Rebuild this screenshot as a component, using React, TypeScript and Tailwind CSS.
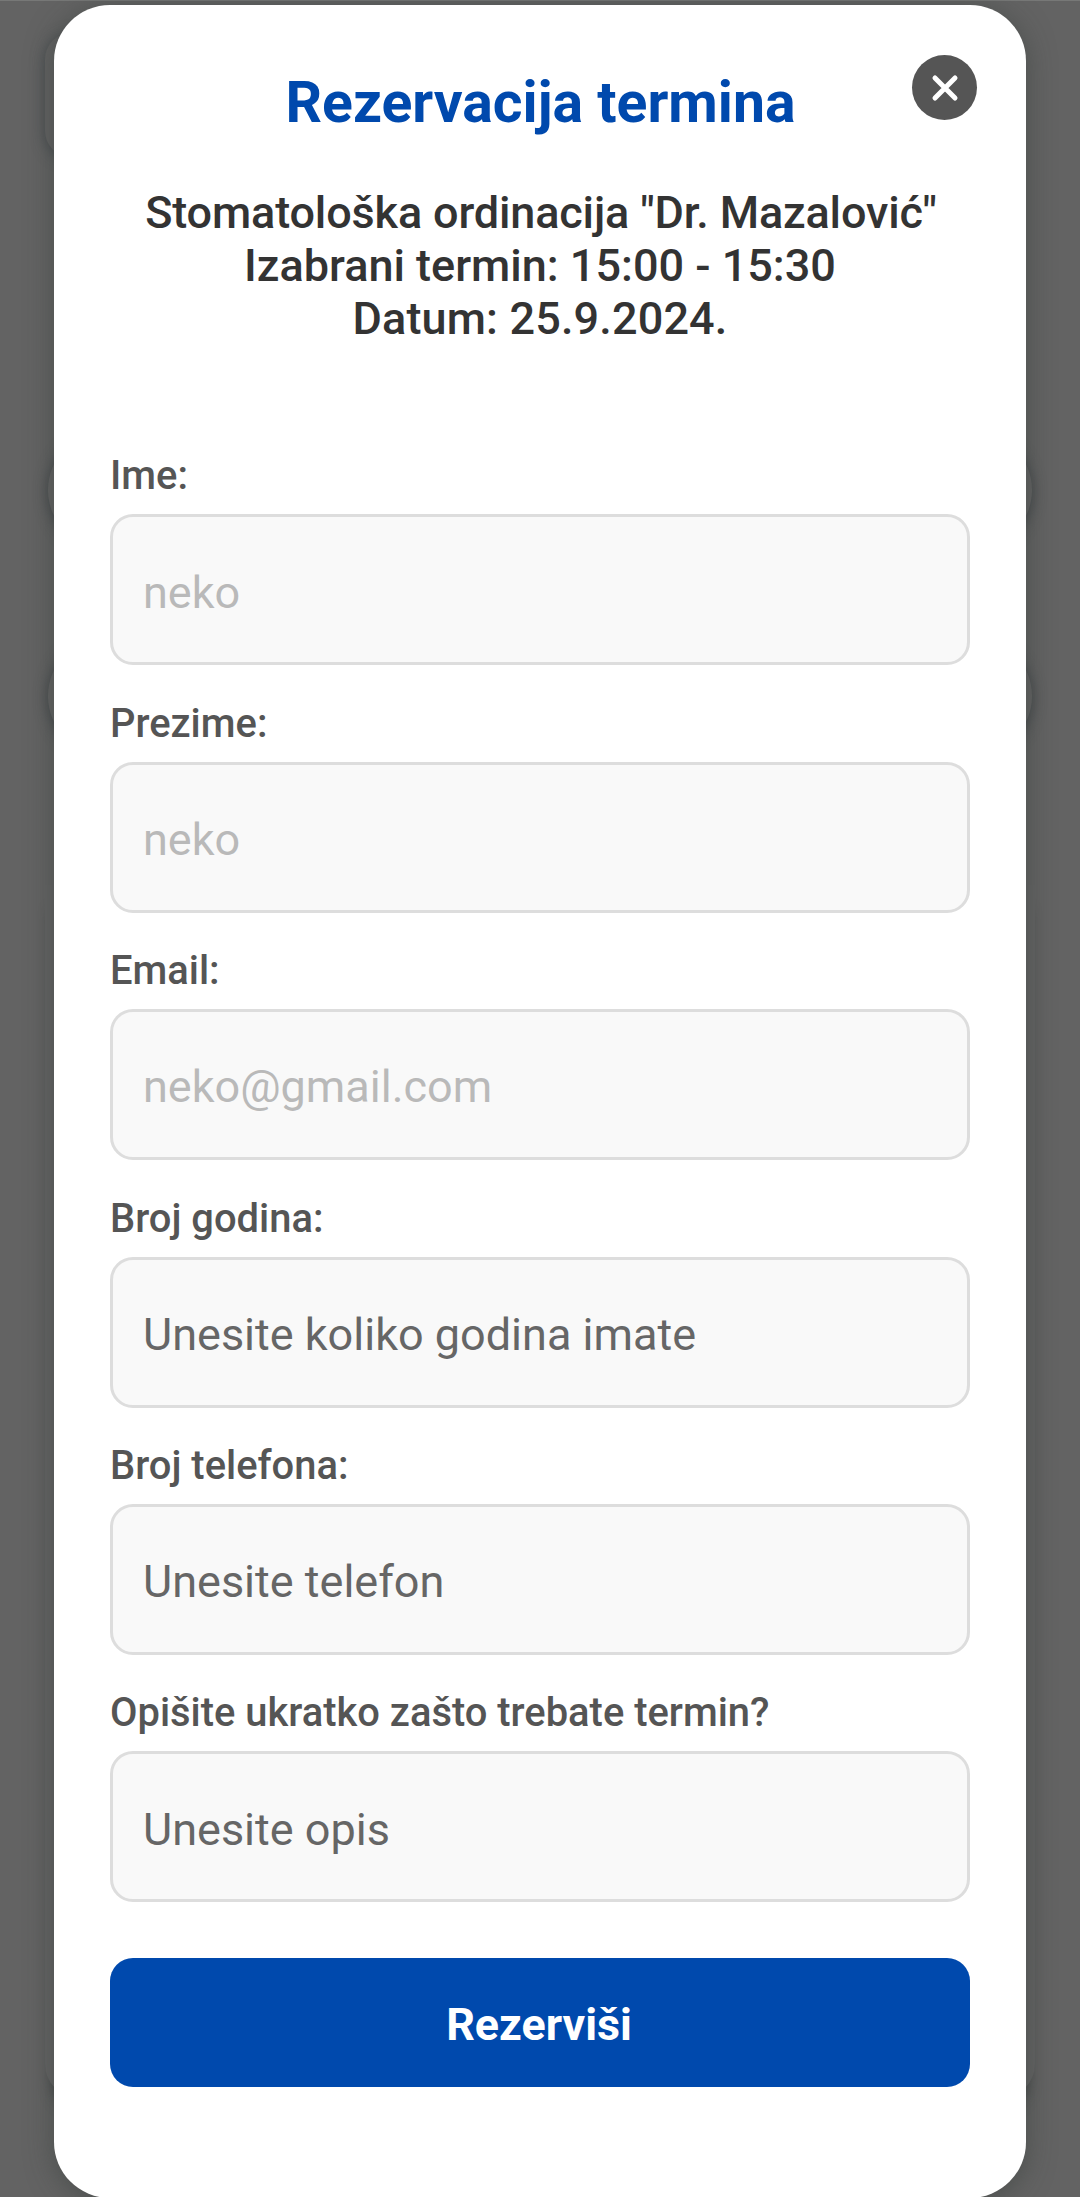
const fields = [
  { label: "Ime:", text: "neko", muted: true },
  { label: "Prezime:", text: "neko", muted: true },
  { label: "Email:", text: "neko@gmail.com", muted: true },
  { label: "Broj godina:", text: "Unesite koliko godina imate", muted: false },
  { label: "Broj telefona:", text: "Unesite telefon", muted: false },
  { label: "Opišite ukratko zašto trebate termin?", text: "Unesite opis", muted: false },
];

// Dimmed page content that peeks out from behind the dialog.
function Backdrop() {
  return (
    <div aria-hidden="true" className="absolute inset-0 flex flex-col border-t border-[#777877] bg-[#636363] px-[45px] pt-8">
      <div className="h-[124px] w-1/2 shrink-0 rounded-[26px] bg-[#626262] shadow-[0_2px_14px_rgba(50,58,64,0.6)]" />
      <div className="flex shrink-0 flex-col gap-[88px] px-[3px] pt-[274px] pb-[130px]">
        <div className="h-[118px] rounded-[59px] bg-[#636363] shadow-[0_2px_14px_rgba(50,56,60,0.7)]" />
        <div className="h-[118px] rounded-[59px] bg-[#636363] shadow-[0_2px_14px_rgba(50,56,60,0.7)]" />
      </div>
      <div className="h-[1213px] shrink-0 rounded-b-[34px] bg-[#646464] shadow-[0_18px_14px_-8px_rgba(40,44,44,0.65)]" />
    </div>
  );
}

export default function App() {
  return (
    <div className="relative h-[2197px] w-[1080px] overflow-hidden px-[54px] pt-[5px] font-[Roboto,sans-serif]">
      <Backdrop />
      <main className="relative flex h-[2193px] flex-col rounded-[56px] bg-white px-14 pt-[63px] shadow-[0_4px_28px_rgba(50,58,54,0.5)]">
        <button aria-label="Zatvori" className="absolute top-[50px] right-[49px] flex size-[65px] items-center justify-center rounded-full bg-[#555]">
          <svg width="28" height="28" viewBox="0 0 28 28" stroke="white" strokeWidth="5" strokeLinecap="round"><path d="M4 4 24 24M24 4 4 24" /></svg>
        </button>
        <header className="flex flex-col gap-12 text-center">
          <h1 className="pl-px text-[57.1px] leading-[70px] font-bold text-[#0049ad]">Rezervacija termina</h1>
          <div className="text-[45px] leading-[53px] font-medium text-[#333]">
            <p className="pl-0.5 tracking-[-0.15px]">Stomatološka ordinacija "Dr. Mazalović"</p>
            <p>Izabrani termin: 15:00 - 15:30</p>
            <p className="tracking-[0.15px]">Datum: 25.9.2024.</p>
          </div>
        </header>
        <form className="flex flex-col gap-14 pt-[108.4px]">
          <div className="flex flex-col gap-[35.4px]">
            {fields.map((f) => (
              <div key={f.label} className="flex flex-col gap-[15px]">
                <p className="text-[39.9px] leading-[46px] font-medium text-[#555]">{f.label}</p>
                <div className={`flex h-[151px] items-center rounded-[23px] border-[3px] border-[#ddd] bg-[#f9f9f9] px-[30px] pt-[5px] text-[45px] ${f.muted ? "text-[#b9b9b9]" : "text-[#666]"}`}>{f.text}</div>
              </div>
            ))}
          </div>
          <button type="button" className="h-[129px] rounded-[23px] bg-[#0049ad] pt-1 pr-0.5 text-[44.8px] font-bold text-white">Rezerviši</button>
        </form>
      </main>
    </div>
  );
}
